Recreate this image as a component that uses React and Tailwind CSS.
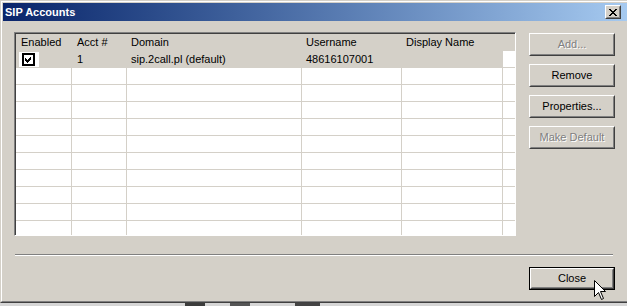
import React from 'react';

const cols = [
  { w: 'w-[56px]', pl: 'pl-[5px]', label: 'Enabled' },
  { w: 'w-[55px]', pl: 'pl-[5px]', label: 'Acct #' },
  { w: 'w-[175px]', pl: 'pl-[4px]', label: 'Domain' },
  { w: 'w-[100px]', pl: 'pl-[4px]', label: 'Username' },
  { w: 'w-[101px]', pl: 'pl-[4px]', label: 'Display Name' },
];

function Check() {
  return (
    <div className="w-[20px] h-[15px] bg-white flex items-center pl-[3px]">
      <svg width="13" height="13" viewBox="0 0 13 13" shapeRendering="crispEdges">
        <rect x="0" y="0" width="13" height="13" fill="#000" />
        <rect x="2" y="2" width="9" height="9" fill="#fff" />
        <polygon points="3,5 5,7 9,3 9,6 5,10 3,8" fill="#000" />
      </svg>
    </div>
  );
}

function CloseGlyph() {
  const px = [
    [0, 0], [1, 0], [6, 0], [7, 0],
    [1, 1], [2, 1], [5, 1], [6, 1],
    [2, 2], [3, 2], [4, 2], [5, 2],
    [3, 3], [4, 3],
    [2, 4], [3, 4], [4, 4], [5, 4],
    [1, 5], [2, 5], [5, 5], [6, 5],
    [0, 6], [1, 6], [6, 6], [7, 6],
  ];
  return (
    <svg width="8" height="7" viewBox="0 0 8 7" shapeRendering="crispEdges">
      {px.map(([x, y], i) => (
        <rect key={i} x={x} y={y} width="1" height="1" fill="#000" />
      ))}
    </svg>
  );
}

function Btn({ children, disabled, isDefault }) {
  const face = (
    <div className="h-full border border-t-white border-l-white border-b-[#404040] border-r-[#404040]">
      <div className="h-full flex items-center justify-center border border-t-[#d4d0c8] border-l-[#d4d0c8] border-b-[#808080] border-r-[#808080]">
        <span className={disabled ? 'text-[#808080] [text-shadow:1px_1px_0_#ffffff]' : 'text-black'}>
          {children}
        </span>
      </div>
    </div>
  );
  return (
    <div className={`w-[86px] h-[23px] ${isDefault ? 'border border-black' : ''}`}>
      {face}
    </div>
  );
}

export default function App() {
  const rows = Array.from({ length: 11 });

  return (
    <div className="relative w-[627px] h-[306px] overflow-hidden bg-[#d6d6d6] text-[11px] leading-none text-black font-['Liberation_Sans',Arial,sans-serif]">
      <div className="h-[303px] bg-[#d4d0c8] border-l border-t border-[#d4d0c8] border-b border-b-[#404040]">
        <div className="h-full border-l border-t border-white border-b border-b-[#808080]">
          <div className="h-full border-l border-t border-[#d4d0c8] flex flex-col">
            {/* title bar */}
            <div className="h-[18px] flex items-center justify-between pl-[2px] pr-[6px] bg-gradient-to-r from-[#0a246a] to-[#a6caf0]">
              <span className="text-white font-bold">SIP Accounts</span>
              <div className="w-[16px] h-[14px] bg-[#d4d0c8] border border-t-white border-l-white border-b-[#404040] border-r-[#404040]">
                <div className="h-full flex items-center justify-center border border-t-[#d4d0c8] border-l-[#d4d0c8] border-b-[#808080] border-r-[#808080]">
                  <CloseGlyph />
                </div>
              </div>
            </div>

            {/* body */}
            <div className="flex mt-[11px] ml-[11px]">
              <div className="w-[502px] h-[204px] border-t border-l border-t-[#808080] border-l-[#808080] border-b border-r border-b-white border-r-white">
                <div className="h-full border-t border-l border-t-[#404040] border-l-[#404040] bg-white overflow-hidden">
                  <div className="h-[17px] flex items-center bg-[#d4d0c8]">
                    {cols.map((c) => (
                      <div key={c.label} className={`${c.w} ${c.pl} shrink-0`}>
                        {c.label}
                      </div>
                    ))}
                  </div>
                  {rows.map((_, r) => (
                    <div key={r} className="h-[17px] flex border-b border-[#d4d0c8]">
                      {cols.map((c, ci) => (
                        <div
                          key={ci}
                          className={`${c.w} shrink-0 h-full flex items-center border-r border-[#d4d0c8] ${r === 0 ? 'bg-[#d4d0c8]' : ''} ${ci === 0 ? 'pl-[3px]' : c.pl}`}
                        >
                          {r === 0 && ci === 0 && <Check />}
                          {r === 0 && ci === 1 && '1'}
                          {r === 0 && ci === 2 && 'sip.2call.pl (default)'}
                          {r === 0 && ci === 3 && '48616107001'}
                        </div>
                      ))}
                      <div className="flex-1" />
                    </div>
                  ))}
                </div>
              </div>

              <div className="ml-[13px] mt-[1px] flex flex-col gap-[8px]">
                <Btn disabled>Add...</Btn>
                <Btn>Remove</Btn>
                <Btn>Properties...</Btn>
                <Btn disabled>Make Default</Btn>
              </div>
            </div>

            <div className="mt-[18px] ml-[12px] w-[598px] border-t border-[#808080] border-b border-b-white" />

            <div className="mt-[11px] ml-[526px]">
              <Btn isDefault>Close</Btn>
            </div>
          </div>
        </div>
      </div>

      {/* desktop strip below the window */}
      <div className="h-[3px] flex">
        <div className="w-[185px]" />
        <div className="w-[20px] bg-[#3c3c3c]" />
        <div className="w-[25px]" />
        <div className="w-[20px] bg-[#555555]" />
        <div className="w-[45px]" />
        <div className="w-[25px] bg-[#444444]" />
      </div>

      {/* mouse pointer */}
      <svg className="absolute left-[594px] top-[280px]" width="13" height="21" viewBox="0 0 13 21">
        <path
          d="M0.5 0.5 L0.5 16.5 L4.5 12.5 L7.5 19.5 L9.5 18.5 L6.5 11.5 L11.5 11.5 Z"
          fill="#ffffff"
          stroke="#000000"
          strokeWidth="1"
          strokeLinejoin="miter"
        />
      </svg>
    </div>
  );
}
